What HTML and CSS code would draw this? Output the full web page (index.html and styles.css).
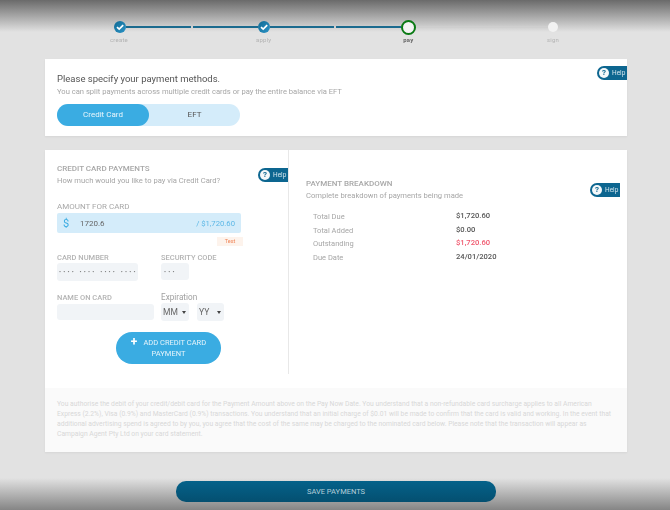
FILE: index.html
```html
<!DOCTYPE html>
<html lang="en">
  <head>
    <meta charset="UTF-8" />
    <title>Payment</title>
    <link rel="stylesheet" href="styles.css">
  </head>
  <body>
    <div class="shade-top"></div>
    <div class="shade-bottom"></div>

    <div class="stepper">
      <div class="track">
        <span class="dot done"><svg viewBox="0 0 12 12"><path d="M3 6.2 5.2 8.2 9.2 4.2" /></svg></span>
        <div class="segment"><span class="line"></span><span class="line"></span></div>
        <span class="dot done"><svg viewBox="0 0 12 12"><path d="M3 6.2 5.2 8.2 9.2 4.2" /></svg></span>
        <div class="segment mid"><span class="line"></span><span class="line"></span></div>
        <span class="dot current"></span>
        <div class="segment"><span class="line todo"></span></div>
        <span class="dot next"></span>
      </div>
      <div class="step-labels">
        <span>create</span>
        <span>apply</span>
        <span class="active">pay</span>
        <span>sign</span>
      </div>
    </div>

    <div class="card methods">
      <a class="help help-methods"><i>?</i>Help</a>
      <h1>Please specify your payment methods.</h1>
      <p class="sub">You can split payments across multiple credit cards or pay the entire balance via EFT</p>
      <div class="toggle">
        <div class="toggle-item selected">Credit Card</div>
        <div class="toggle-item">EFT</div>
      </div>
    </div>

    <div class="card payments">
      <div class="columns">
        <div class="col-left">
          <a class="help help-card"><i>?</i>Help</a>
          <h2>CREDIT CARD PAYMENTS</h2>
          <p class="sub">How much would you like to pay via Credit Card?</p>
          <label class="amount-label">AMOUNT FOR CARD</label>
          <div class="amount">
            <span class="currency">$</span>
            <span class="value">1720.6</span>
            <span class="total">/ $1,720.60</span>
          </div>
          <div class="test-row"><span class="test">Test</span></div>
          <div class="form-row first">
            <div class="field field-number">
              <label>CARD NUMBER</label>
              <div class="input number">•••• •••• •••• ••••</div>
            </div>
            <div class="field">
              <label>SECURITY CODE</label>
              <div class="input code">•••</div>
            </div>
          </div>
          <div class="form-row second">
            <div class="field field-name">
              <label>NAME ON CARD</label>
              <div class="input name"></div>
            </div>
            <div class="field">
              <label class="plain">Expiration</label>
              <div class="selects">
                <div class="input pick mm">MM<b></b></div>
                <div class="input pick yy">YY<b></b></div>
              </div>
            </div>
          </div>
          <button class="add-btn"><span class="plus">+</span>ADD CREDIT CARD<br>PAYMENT</button>
        </div>
        <div class="col-right">
          <a class="help help-breakdown"><i>?</i>Help</a>
          <h2>PAYMENT BREAKDOWN</h2>
          <p class="sub">Complete breakdown of payments being made</p>
          <div class="breakdown">
            <span>Total Due</span><strong>$1,720.60</strong>
            <span>Total Added</span><strong>$0.00</strong>
            <span>Outstanding</span><strong class="red">$1,720.60</strong>
            <span>Due Date</span><strong>24/01/2020</strong>
          </div>
        </div>
      </div>
      <div class="legal">
        You authorise the debit of your credit/debit card for the Payment Amount above on the Pay Now Date. You understand that a non-refundable card surcharge applies to all American
        Express (2.2%), Visa (0.9%) and MasterCard (0.9%) transactions. You understand that an initial charge of $0.01 will be made to confirm that the card is valid and working. In the event that
        additional advertising spend is agreed to by you, you agree that the cost of the same may be charged to the nominated card below. Please note that the transaction will appear as
        Campaign Agent Pty Ltd on your card statement.
      </div>
    </div>

    <div class="save-row">
      <button class="save">SAVE PAYMENTS</button>
    </div>
  </body>
</html>
```

FILE: styles.css
```css
html,
body {
  height: 510px;
  overflow: hidden;
}

body {
  font-family: Roboto, "Liberation Sans", sans-serif;
  background-color: #e2e2e2;
  margin: 0;
  color: #555;
  position: relative;
  filter: blur(0.4px);
}

.shade-top,
.shade-bottom {
  position: absolute;
  left: 0;
  right: 0;
  pointer-events: none;
}

.shade-top {
  top: 0;
  height: 32px;
  background: linear-gradient(#6a6a6a, #e2e2e2);
}

.shade-bottom {
  bottom: 0;
  height: 32px;
  background: linear-gradient(#e2e2e2, #858585);
}

/* stepper */
.stepper {
  position: relative;
  height: 59px;
  padding-top: 19px;
  box-sizing: border-box;
}

.track {
  display: flex;
  align-items: center;
  height: 16px;
  margin-left: 113.5px;
}

.segment {
  display: flex;
  gap: 2px;
  width: 132.5px;
}

.segment.mid {
  width: 130.5px;
}

.dot {
  flex: none;
  border-radius: 50%;
  box-sizing: border-box;
}

.dot.done {
  width: 12px;
  height: 12px;
  background: linear-gradient(135deg, #0f6a94, #2c93c6);
}

.dot.done svg {
  display: block;
  width: 12px;
  height: 12px;
  fill: none;
  stroke: #fff;
  stroke-width: 1.7;
}

.dot.current {
  width: 15px;
  height: 15px;
  background: #f4f4f4;
  border: 2.5px solid #0a7a14;
}

.dot.next {
  width: 10px;
  height: 10px;
  background: #f2f2f2;
}

.line {
  flex: 1;
  height: 2px;
  background-color: #1a6a8e;
}

.line.todo {
  background-color: #cfcfcf;
}

.step-labels {
  display: grid;
  grid-template-columns: repeat(4, 60px);
  column-gap: 84.7px;
  margin-left: 89px;
  font-size: 6px;
  line-height: 9px;
  text-align: center;
  letter-spacing: 0.2px;
  color: #b3b3b3;
}

.step-labels .active {
  color: #666;
  font-weight: 700;
}

/* cards */
.card {
  position: relative;
  background-color: #fff;
  margin: 0 43px 0 45px;
  box-shadow: 0 1px 2px rgba(0, 0, 0, 0.06);
}

.methods {
  height: 77px;
  padding: 14px 12px 0;
  box-sizing: border-box;
}

.payments {
  margin-top: 14px;
  height: 302px;
}

h1 {
  margin: 0;
  font-size: 9.5px;
  line-height: 12px;
  font-weight: 400;
  color: #555;
}

h2 {
  margin: 0;
  font-size: 8px;
  line-height: 10px;
  font-weight: 500;
  color: #a8a8a8;
}

.sub {
  margin: 1px 0 0;
  font-size: 7.6px;
  line-height: 11px;
  color: #a6a6a6;
}

.toggle {
  display: flex;
  width: 183px;
  height: 22px;
  margin-top: 7px;
  border-radius: 11px;
  background-color: #d4ecfa;
}

.toggle-item {
  flex: 1;
  font-size: 8px;
  line-height: 22px;
  text-align: center;
  color: #555;
  border-radius: 11px;
}

.toggle-item.selected {
  flex: none;
  width: 92px;
  background-color: #3aace2;
  color: #eaf6fc;
}

/* help tabs */
.help {
  position: absolute;
  display: flex;
  align-items: center;
  gap: 3px;
  height: 14px;
  width: 30px;
  box-sizing: border-box;
  padding-left: 2px;
  border-radius: 7px 0 0 7px;
  background-color: #0d6690;
  color: #d5e6ee;
  font-size: 6.5px;
}

.help i {
  flex: none;
  width: 10px;
  height: 10px;
  border-radius: 50%;
  background-color: #f4f8fa;
  color: #0d6690;
  font-style: normal;
  font-weight: 700;
  font-size: 8px;
  line-height: 10px;
  text-align: center;
}

.help-methods {
  top: 7px;
  right: 0;
}

.help-card {
  top: 18px;
  right: 0;
}

.help-breakdown {
  top: 33px;
  right: 7px;
}

/* two columns */
.columns {
  display: flex;
  height: 224px;
  margin-bottom: 14px;
}

.col-left {
  position: relative;
  width: 244px;
  box-sizing: border-box;
  padding: 14px 0 0 12px;
  border-right: 1px solid #e8e8e8;
}

.col-right {
  position: relative;
  flex: 1;
  padding: 29px 0 0 17px;
}

label {
  display: block;
  font-size: 7.5px;
  line-height: 10px;
  font-weight: 500;
  color: #b4b4b4;
}

.amount-label {
  margin-top: 16px;
  font-size: 8px;
  font-weight: 400;
  color: #a8a8a8;
}

.amount {
  display: flex;
  align-items: center;
  width: 184px;
  height: 20px;
  margin-top: 1px;
  padding: 0 6px;
  box-sizing: border-box;
  background-color: #d4ecfa;
  border-radius: 2px;
  font-size: 8px;
}

.currency {
  width: 17px;
  color: #3aace2;
  font-size: 11px;
}

.value {
  flex: 1;
  color: #666;
}

.total {
  font-size: 7.7px;
  color: #5db8e6;
}

.test-row {
  display: flex;
  justify-content: flex-end;
  width: 186px;
  height: 9px;
  margin-top: 4px;
}

.test {
  width: 26px;
  background-color: #fdf3ec;
  color: #f0865a;
  font-size: 5.5px;
  line-height: 9px;
  text-align: center;
}

.form-row {
  display: flex;
}

.form-row.first {
  margin-top: 7px;
}

.form-row.second {
  margin-top: 12px;
}

.field-number {
  width: 104px;
}

.field-name {
  width: 104px;
}

.input {
  background-color: #f1f4f7;
  border-radius: 3px;
  box-sizing: border-box;
  color: #777;
}

.number {
  width: 81px;
  height: 18px;
  padding-left: 2px;
  font-size: 6px;
  line-height: 18px;
  letter-spacing: 2.2px;
  white-space: nowrap;
  overflow: hidden;
}

.code {
  width: 28px;
  height: 17px;
  padding-left: 3px;
  font-size: 6px;
  line-height: 17px;
  letter-spacing: 2.2px;
}

.name {
  width: 97px;
  height: 16px;
  margin-top: 1px;
}

.plain {
  margin-top: -1px;
  font-size: 8.2px;
  font-weight: 400;
  color: #a0a0a0;
  line-height: 11px;
}

.selects {
  display: flex;
  gap: 8px;
}

.pick {
  display: flex;
  align-items: center;
  justify-content: space-between;
  width: 28px;
  height: 18px;
  padding: 0 3px 0 2px;
  font-size: 8.5px;
  color: #666;
}

.pick.yy {
  width: 27px;
}

.pick b {
  width: 0;
  height: 0;
  border-left: 2px solid transparent;
  border-right: 2px solid transparent;
  border-top: 3.5px solid #444;
}

.add-btn {
  display: block;
  width: 105px;
  height: 32px;
  margin: 11px 0 0 59px;
  padding: 0;
  border: none;
  border-radius: 16px;
  background-color: #3aace2;
  color: #e6f4fb;
  font-family: inherit;
  font-size: 7.5px;
  line-height: 11px;
}

.plus {
  font-size: 12px;
  font-weight: 700;
  line-height: 10px;
  margin-right: 6px;
  vertical-align: -1px;
  color: #fff;
}

/* breakdown table */
.breakdown {
  display: grid;
  grid-template-columns: 143px auto;
  grid-auto-rows: 13.6px;
  margin: 9px 0 0 7px;
  font-size: 7.5px;
  line-height: 13.6px;
  color: #a6a6a6;
}

.breakdown strong {
  font-size: 7.6px;
  font-weight: 500;
  color: #555;
  margin-top: -1px;
}

.breakdown .red {
  color: #f0566c;
}

.legal {
  height: 64px;
  padding: 11px 15px 0 12px;
  box-sizing: border-box;
  background-color: #fafafa;
  font-size: 6.75px;
  line-height: 10px;
  color: #d8d8d8;
}

/* save button */
.save-row {
  position: relative;
  display: flex;
  justify-content: center;
  margin-top: 29px;
}

.save {
  width: 320px;
  height: 21px;
  margin-left: 2px;
  border: none;
  border-radius: 10px;
  background: linear-gradient(#05628a, #044f70);
  color: #b5cfda;
  font-family: inherit;
  font-size: 7.5px;
}
```
